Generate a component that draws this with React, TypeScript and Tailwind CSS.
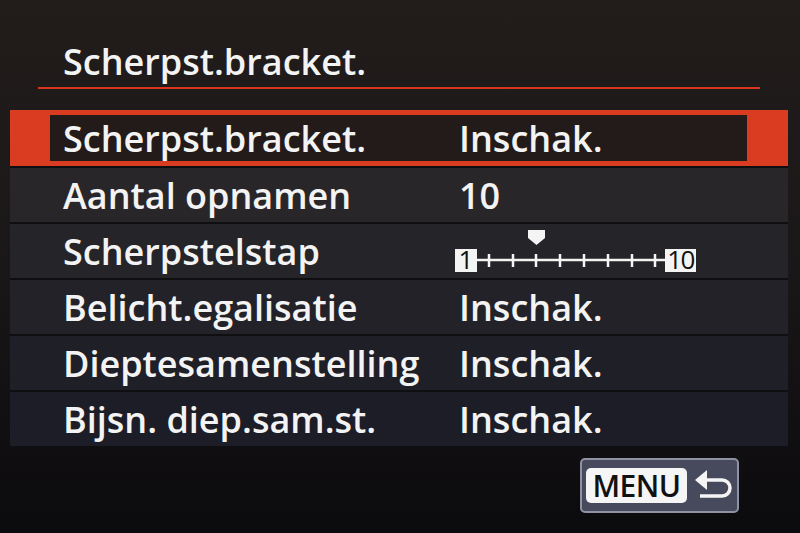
import React from "react";

const font = { fontFamily: "'Open Sans', 'Noto Sans', sans-serif" };

function Slider() {
  const ticks = [34, 58, 81, 105, 129, 153, 177, 200];
  return (
    <svg width="245" height="54" viewBox="0 0 245 54" className="block">
      <path d="M73 6 H90 V14 L81.5 21 L73 14 Z" fill="#f4f4f4" />
      <line x1="22" y1="36" x2="210" y2="36" stroke="#f4f4f4" strokeWidth="2.5" />
      {ticks.map((x) => (
        <line key={x} x1={x} y1="30" x2={x} y2="43" stroke="#f4f4f4" strokeWidth="2.5" />
      ))}
      <rect x="0" y="25" width="22" height="23" fill="#f4f4f4" />
      <rect x="210" y="25" width="31" height="23" fill="#f4f4f4" />
      <text x="11" y="45" textAnchor="middle" fontSize="26" fontWeight="500" fill="#111" style={font}>1</text>
      <text x="225.5" y="45" textAnchor="middle" fontSize="26" fontWeight="500" fill="#111" style={font} letterSpacing="-1.5">10</text>
    </svg>
  );
}

function Row({ label, value, bg }: { label: string; value?: string; bg: string }) {
  return (
    <div className={`flex items-center h-[54px] pl-[53px] ${bg}`}>
      <div className="w-[396px] leading-none pt-[2px]">{label}</div>
      {value ? <div className="leading-none pt-[2px]">{value}</div> : <div className="-ml-[4px]"><Slider /></div>}
    </div>
  );
}

export default function App() {
  return (
    <div
      className="w-[800px] h-[533px] overflow-hidden flex flex-col bg-gradient-to-b from-[#221d1b] via-[#1a1718] to-[#0b0a0d] text-[#f3f3f3] text-[36px] font-semibold"
      style={font}
    >
      <div className="ml-[63px] mt-[44px] h-[36px] leading-none">Scherpst.bracket.</div>
      <div className="ml-[38px] mt-[7px] w-[722px] h-[2px] bg-[#d8351e]" />
      <div className="ml-[10px] mt-[21px] w-[778px] flex flex-col gap-[2px] bg-[#0f0e11]">
        <div className="h-[56px] bg-[#d93c21] py-[5px] pl-[40px] pr-[41px]">
          <div className="h-full bg-[#231b1a] flex items-center pl-[13px]">
            <div className="w-[396px] leading-none pt-[2px]">Scherpst.bracket.</div>
            <div className="leading-none pt-[2px]">Inschak.</div>
          </div>
        </div>
        <Row label="Aantal opnamen" value="10" bg="bg-[#29262a]" />
        <Row label="Scherpstelstap" bg="bg-[#252428]" />
        <Row label="Belicht.egalisatie" value="Inschak." bg="bg-[#222228]" />
        <Row label="Dieptesamenstelling" value="Inschak." bg="bg-[#1f1f28]" />
        <Row label="Bijsn. diep.sam.st." value="Inschak." bg="bg-[#1c1d27]" />
        <div className="h-0" />
      </div>
      <div className="ml-[580px] mt-[10px] w-[159px] h-[55px] rounded-[5px] border-2 border-[#8e92a3] bg-[#464a5c] flex items-center pl-[4px]">
        <div className="w-[101px] h-[35px] rounded-[5px] bg-[#f5f5f5] text-[#111] text-[30px] font-semibold leading-none flex items-center justify-center tracking-[-0.5px]">
          MENU
        </div>
        <svg width="44" height="34" viewBox="0 0 44 34" className="ml-[5px]">
          <path d="M3 11 L15 1 V21 Z" fill="#f5f5f5" />
          <path d="M12 11 H30 A8 8 0 0 1 30 27 H8" fill="none" stroke="#f5f5f5" strokeWidth="3.5" />
        </svg>
      </div>
    </div>
  );
}
